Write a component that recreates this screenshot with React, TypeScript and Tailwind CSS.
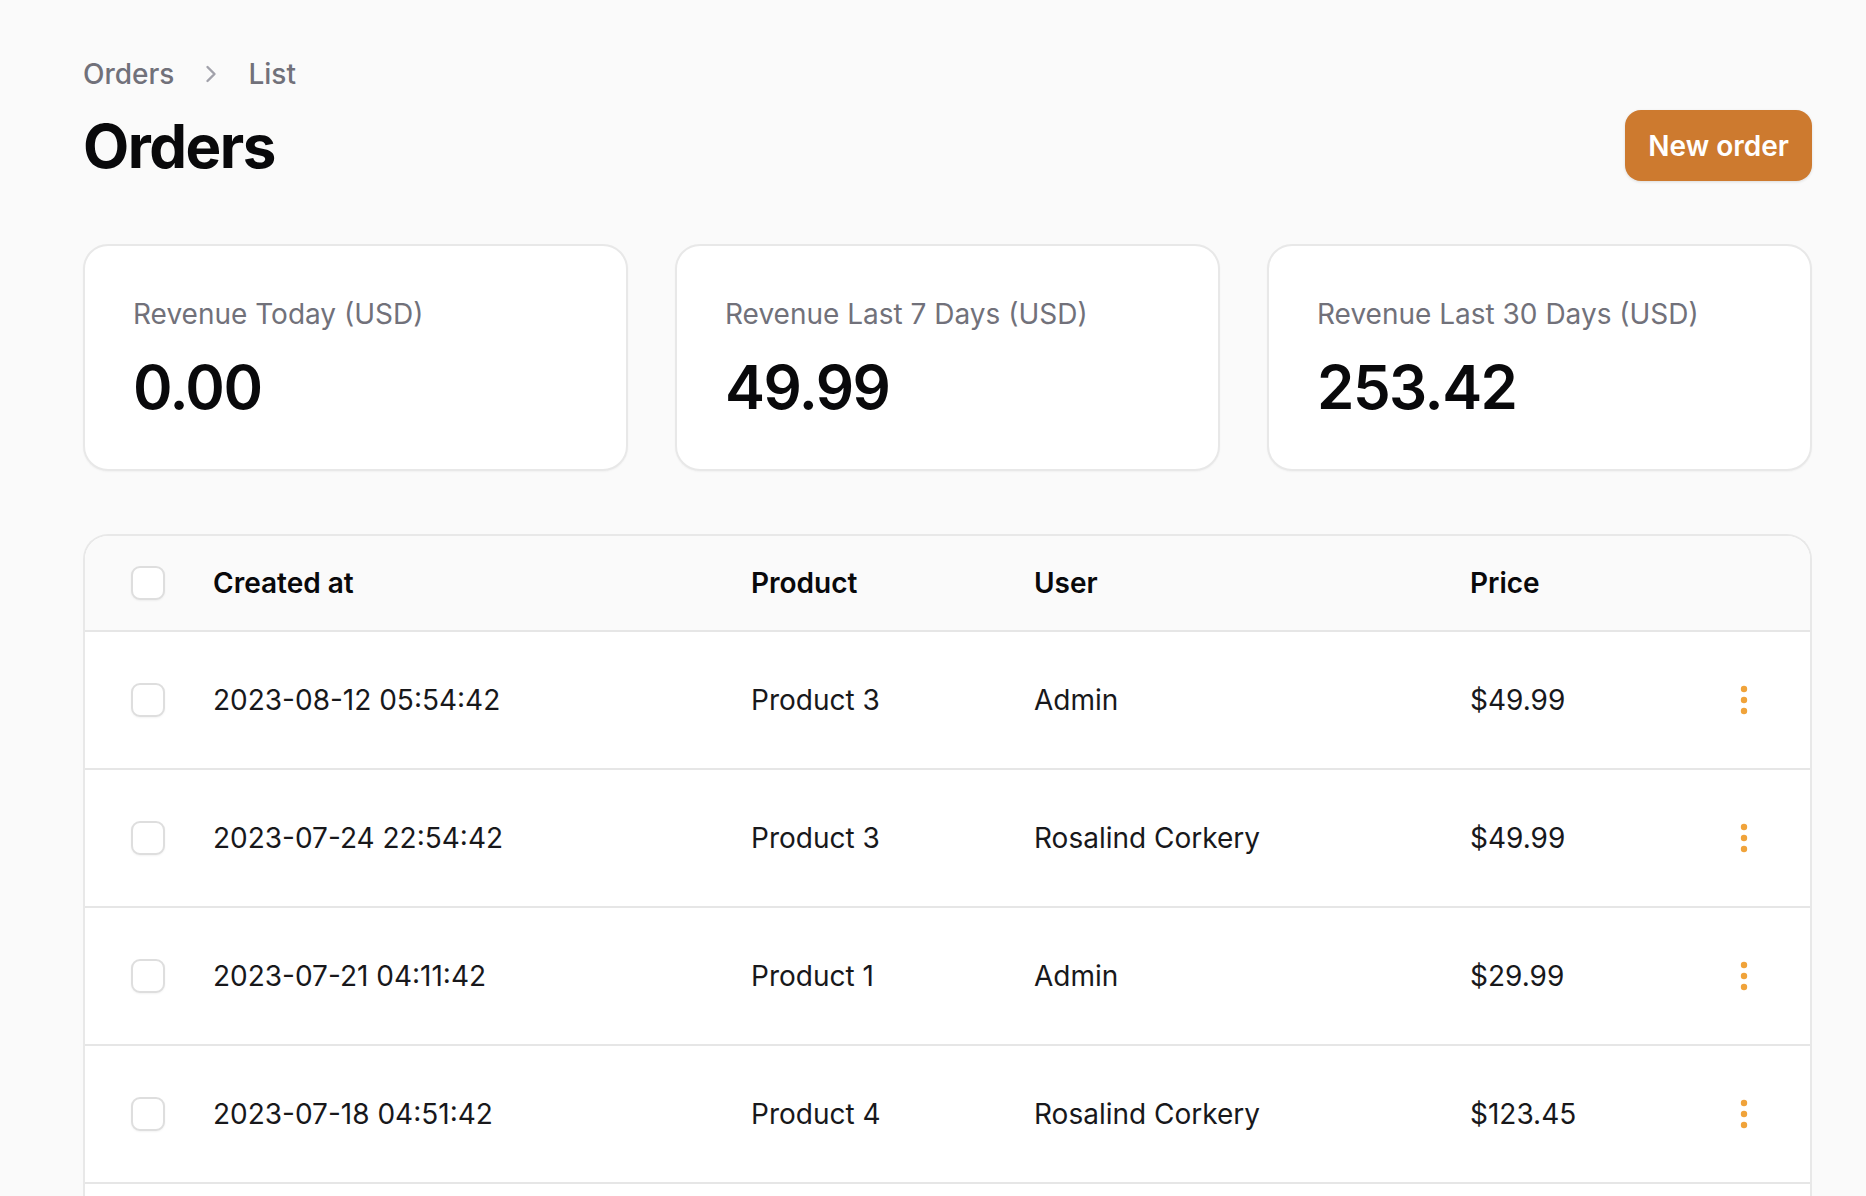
import React from 'react';

// Orders list page – stats cards + table

interface Order {
  createdAt: string;
  product: string;
  user: string;
  price: string;
}

const orders: Order[] = [
  { createdAt: '2023-08-12 05:54:42', product: 'Product 3', user: 'Admin', price: '$49.99' },
  { createdAt: '2023-07-24 22:54:42', product: 'Product 3', user: 'Rosalind Corkery', price: '$49.99' },
  { createdAt: '2023-07-21 04:11:42', product: 'Product 1', user: 'Admin', price: '$29.99' },
  { createdAt: '2023-07-18 04:51:42', product: 'Product 4', user: 'Rosalind Corkery', price: '$123.45' },
];

const stats = [
  { label: 'Revenue Today (USD)', value: '0.00' },
  { label: 'Revenue Last 7 Days (USD)', value: '49.99' },
  { label: 'Revenue Last 30 Days (USD)', value: '253.42' },
];

const Checkbox = () => (
  <div className="w-[34px] h-[34px] rounded-[9px] border-2 border-[#dedede] bg-white shadow-[0_1px_2px_rgba(0,0,0,0.05)]" />
);

const Dots = () => (
  <svg width="8" height="30" viewBox="0 0 8 30" className="text-[#f0a33a]">
    <circle cx="4" cy="4" r="3.2" fill="currentColor" />
    <circle cx="4" cy="15" r="3.2" fill="currentColor" />
    <circle cx="4" cy="26" r="3.2" fill="currentColor" />
  </svg>
);

export default function App() {
  return (
    <div className="min-h-screen bg-[#fafafa] pl-[83px] pr-[54px] pt-[56px] font-['Inter',sans-serif] text-[#09090b]">
      {/* Breadcrumb */}
      <nav className="flex items-center gap-[30px] h-[36px] text-[28px] font-medium text-[#71717a]">
        <span>Orders</span>
        <svg width="14" height="20" viewBox="0 0 14 20" className="text-[#a1a1aa]">
          <path d="M3.5 3 L10.5 10 L3.5 17" fill="none" stroke="currentColor" strokeWidth="2.4" strokeLinecap="round" strokeLinejoin="round" />
        </svg>
        <span>List</span>
      </nav>

      {/* Header */}
      <div className="mt-[18px] flex items-center justify-between h-[71px]">
        <h1 className="text-[60px] leading-none font-bold tracking-tight">Orders</h1>
        <button className="h-[71px] px-[23px] rounded-[16px] bg-[#cd7a2f] text-white text-[28px] font-semibold shadow-[0_1px_3px_rgba(0,0,0,0.12)]">
          New order
        </button>
      </div>

      {/* Stats */}
      <div className="mt-[63px] grid grid-cols-3 gap-[47px]">
        {stats.map((s) => (
          <div
            key={s.label}
            className="h-[227px] rounded-[25px] border-2 border-[#e8e8e8] bg-white px-[48px] pt-[50px] shadow-[0_1px_2px_rgba(0,0,0,0.04)]"
          >
            <p className="text-[28px] leading-[36px] text-[#71717a]">{s.label}</p>
            <p className="mt-[25px] text-[60px] leading-[60px] font-semibold tracking-tight">{s.value}</p>
          </div>
        ))}
      </div>

      {/* Table */}
      <div className="mt-[63px] rounded-t-[25px] border-2 border-b-0 border-[#e8e8e8] bg-white overflow-hidden">
        <div className="flex items-center h-[96px] bg-[#fafafa] border-b-2 border-[#e6e6e6] pl-[46px] pr-[46px] text-[28px] font-semibold">
          <div className="w-[82px]"><Checkbox /></div>
          <div className="w-[538px]">Created at</div>
          <div className="w-[283px]">Product</div>
          <div className="w-[436px]">User</div>
          <div className="flex-1">Price</div>
          <div className="w-[40px]" />
        </div>
        {orders.map((o, i) => (
          <div
            key={i}
            className="flex items-center h-[138px] border-b-2 border-[#e6e6e6] pl-[46px] pr-[46px] text-[28px] text-[#18181b]"
          >
            <div className="w-[82px]"><Checkbox /></div>
            <div className="w-[538px]">{o.createdAt}</div>
            <div className="w-[283px]">{o.product}</div>
            <div className="w-[436px]">{o.user}</div>
            <div className="flex-1">{o.price}</div>
            <div className="w-[40px] flex justify-center"><Dots /></div>
          </div>
        ))}
        {/* next row, below the fold */}
        <div className="h-[138px] border-b-2 border-[#e6e6e6]" />
      </div>
    </div>
  );
}
